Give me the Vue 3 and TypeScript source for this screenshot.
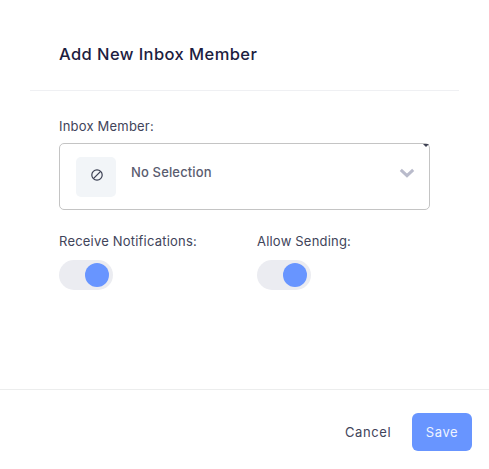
<script setup lang="ts">
const toggles: string[] = ['Receive Notifications:', 'Allow Sending:']
</script>

<template>
  <div class="modal">
    <header class="head">
      <h2 class="title">Add New Inbox Member</h2>
    </header>
    <div class="body">
      <label class="label">Inbox Member:</label>
      <div class="select">
        <span class="tile">
          <svg class="ban" width="14" height="14" viewBox="0 0 14 14" fill="none" stroke="#3b3f52" stroke-width="1.2">
            <circle cx="7" cy="7" r="5.2" />
            <path d="M3.4 10.6 10.6 3.4" />
          </svg>
        </span>
        <span class="value">No Selection</span>
        <svg class="chev" width="16" height="10" viewBox="0 0 16 10" fill="none" stroke="#b9bbcb" stroke-width="3">
          <path d="M1.8 1.8 8 7.6l6.2-5.8" />
        </svg>
        <span class="caret"></span>
      </div>
      <div class="toggles">
        <div v-for="t in toggles" :key="t" class="toggle-col">
          <span class="label">{{ t }}</span>
          <span class="switch"><span class="knob"></span></span>
        </div>
      </div>
    </div>
    <footer class="foot">
      <button class="cancel" type="button">Cancel</button>
      <button class="save" type="button">Save</button>
    </footer>
  </div>
</template>

<style>
html, body { margin: 0; background: #fff; }
</style>

<style scoped>
.modal {
  width: 489px;
  height: 469px;
  display: flex;
  flex-direction: column;
  box-sizing: border-box;
  font-family: "Inter", "Open Sans", sans-serif;
  color: #3f4254;
  background: #fff;
  overflow: hidden;
}
.head {
  margin: 0 30px 0 30px;
  height: 91px;
  box-sizing: border-box;
  border-bottom: 1px solid #eff0f3;
  padding: 42px 0 0 29px;
}
.title {
  margin: 0;
  font-size: 16.5px;
  line-height: 24px;
  font-weight: 500;
  letter-spacing: 0.42px;
  color: #1c2040;
}
.body {
  flex: 1;
  padding: 25px 59px 0;
  display: flex;
  flex-direction: column;
}
.label {
  display: block;
  font-size: 13px;
  line-height: 20px;
  letter-spacing: 0.2px;
  white-space: nowrap;
  color: #41445a;
}
.select {
  position: relative;
  margin-top: 7px;
  width: 371px;
  height: 67px;
  box-sizing: border-box;
  border: 1px solid #c4c4c4;
  border-radius: 5px;
  display: flex;
  align-items: center;
  padding-left: 16px;
}
.tile {
  width: 40px;
  height: 40px;
  border-radius: 5px;
  background: #f2f5f8;
  display: flex;
  align-items: center;
  justify-content: center;
}
.ban {
  margin: -4px 0 0 1px;
}
.value {
  margin-left: 15px;
  margin-top: -10px;
  font-size: 13px;
  font-weight: 500;
  letter-spacing: 0.15px;
  color: #5a5c6f;
}
.chev {
  position: absolute;
  right: 14px;
  top: 24px;
}
.caret {
  position: absolute;
  right: 0;
  top: 0;
  width: 0;
  height: 0;
  border-left: 3px solid transparent;
  border-right: 3px solid transparent;
  border-top: 3px solid #3f4254;
}
.toggles {
  display: flex;
  margin-top: 21px;
}
.toggle-col {
  flex: none;
  width: 198px;
}
.switch {
  display: block;
  margin-top: 9px;
  width: 54px;
  height: 30px;
  border-radius: 15px;
  background: #ebecf1;
  position: relative;
}
.knob {
  position: absolute;
  left: 26px;
  top: 3px;
  width: 24px;
  height: 24px;
  border-radius: 50%;
  background: #6895ff;
}
.foot {
  height: 80px;
  box-sizing: border-box;
  border-top: 1px solid #eceded;
  display: flex;
  justify-content: flex-end;
  align-items: flex-start;
  padding: 23px 17px 0 0;
}
button {
  font-family: inherit;
  font-size: 13px;
  letter-spacing: 0.6px;
  border: 0;
  cursor: pointer;
  height: 38px;
  padding: 0;
}
.cancel {
  background: none;
  color: #41445a;
  width: 46px;
  margin-right: 21px;
}
.save {
  width: 60px;
  border-radius: 6px;
  background: #6895ff;
  color: #eef3ff;
}
</style>
